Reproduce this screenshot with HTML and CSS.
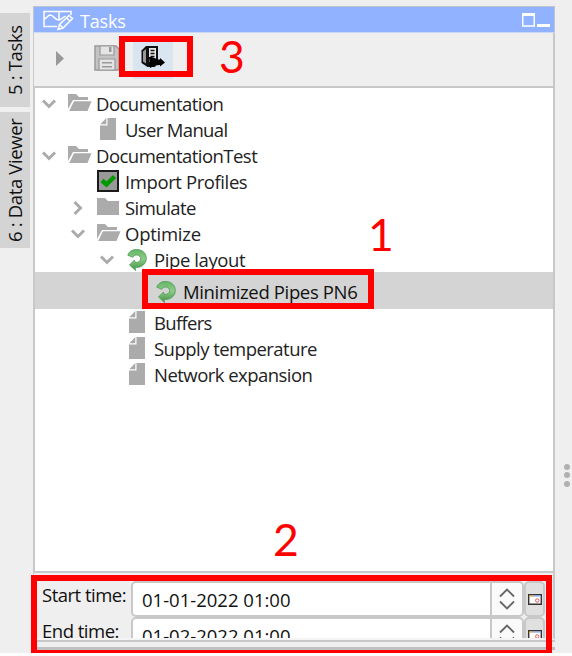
FILE: index.html
```
<!DOCTYPE html>
<html lang="en">
<head>
<meta charset="utf-8">
<title>Tasks</title>
<link rel="stylesheet" href="styles.css">
</head>
<body>
<svg class="defs" width="0" height="0" aria-hidden="true">
  <defs>
    <linearGradient id="leaf" x1="0" y1="0" x2="0" y2="1"><stop offset="0" stop-color="#62b566"/><stop offset=".45" stop-color="#8fcb88"/><stop offset="1" stop-color="#3f9145"/></linearGradient>
    <symbol id="down" viewBox="0 0 16 12"><path d="M2 2.500 8 8.500 14 2.500" fill="none" stroke="#ababab" stroke-width="3"/></symbol>
    <symbol id="right" viewBox="0 0 12 16"><path d="M2.500 2 8.500 8 2.500 14" fill="none" stroke="#ababab" stroke-width="3"/></symbol>
    <symbol id="open" viewBox="0 0 24 18"><path d="M0 15V0h8l3 3h9v3H5Z" fill="#ababab"/><path d="M6 7.300h17.500L19.500 17H1.200Z" fill="#ababab"/></symbol>
    <symbol id="folder" viewBox="0 0 24 18"><path d="M0 0h8l3 3h11v14H0Z" fill="#ababab"/></symbol>
    <symbol id="page" viewBox="0 0 16 22"><path d="M7.500 0H16v22H0V7.500h7.500Z" fill="#ababab"/><path d="M6.300 0v6.300H.300Z" fill="#ababab"/></symbol>
    <symbol id="check" viewBox="0 0 22 22"><path d="M1 1h20v20H1Z" fill="#999" stroke="#1b1b1b" stroke-width="2"/><path d="m5 10.500 4.500 4L17.500 6.500" fill="none" stroke="#009a00" stroke-width="4.500"/></symbol>
    <symbol id="cycle" viewBox="0 0 20 22"><path d="M.800 6.200C2 2.300 5.500.500 9.700.500c5.500 0 9.600 3.600 9.600 8.800 0 5.300-4 9-9.700 9.200l-1.600.1.600 3L2.500 16l5-5 .6 2.500c2.900.2 5.500-1.200 5.500-3.900 0-2.200-1.600-3.600-3.800-3.600-1.800 0-3 .7-3.900 2.300Z" fill="url(#leaf)" stroke="#4a9c50" stroke-width=".8"/></symbol>
    <symbol id="calendar" viewBox="0 0 14 11"><path d="M.700.700h12.600v9.600H.700Z" fill="#fff" stroke="#333" stroke-width="1.400"/><path d="M1.400 1.400H5v1.300H1.400Z" fill="#f0b040"/><path d="M5 1.400h7.600v1.300H5Z" fill="#91b2ff"/><circle cx="9.200" cy="6.500" r="1.700" fill="none" stroke="#ef5555"/></symbol>
  </defs>
</svg>
<div class="app">
  <nav class="side">
    <div class="tab tab-tasks"><span>5 : Tasks</span></div>
    <div class="tab tab-viewer"><span>6 : Data Viewer</span></div>
  </nav>
  <main class="panel">
    <header class="title">
      <svg class="logo" width="32" height="22" viewBox="0 0 32 22" fill="none" stroke="#fff" stroke-width="1.500"><path d="M14 16.500H1V1.500h27V5M1.500 9c3-1 3-4 6-4s5 6 9 5l6-4M16 2v8"/><path d="m15 19.500 1.500-5L26 5.500l3.500 3-9.500 9.500Z" fill="#91b2ff"/><path d="m16.500 14.500 3.500 3.500M23.500 8l3.500 3"/></svg>
      <h1>Tasks</h1>
      <svg class="window" width="28" height="14" viewBox="0 0 28 14" fill="none" stroke="#fff"><path d="M.750 0v13h11.500V0" stroke-width="1.500"/><path d="M0 1.500h13" stroke-width="3"/><path d="M15 12.500h13" stroke-width="3"/></svg>
    </header>
    <div class="toolbar">
      <svg class="play" width="8" height="15" viewBox="0 0 8 15"><path d="m0 0 8 7.500L0 15Z" fill="#999"/></svg>
      <svg class="save" width="26" height="26" viewBox="0 0 26 26"><path d="M1 1h21l3 3v21H1Z" fill="#c4c4c4" stroke="#999" stroke-width="1.500"/><path d="M6 1h14v9H6ZM5 14h16v11H5Z" fill="#e4e4e4" stroke="#999" stroke-width="1.200"/><path d="M15 2h2.500v5H15ZM8 17h10v1.500H8Zm0 4h10v1.500H8Z" fill="#999"/></svg>
      <div class="run"><svg width="24" height="24" viewBox="0 0 24 24"><path d="M.500 5.500 5 1h12v16l-3 5H6.500l-6-4Z" fill="#111"/><path d="M2 6.500 5 4v14.500L2 16.500Z" fill="#999"/><path d="M8 3h7v14H8Z" fill="#e8e8e8"/><path d="M9.500 5.500h4M9.500 8.500h4M9.500 11.500h4" stroke="#111" stroke-width="1.300"/><path d="M8 12h3l6 2.500h2V13l5 4.500-5 4V20l-5 .5L9 23Z" fill="#000"/></svg></div>
    </div>
    <section class="tree">
      <div class="row l0"><svg class="arrow"><use href="#down"/></svg><svg class="fold"><use href="#open"/></svg><span class="label t1">Documentation</span></div>
      <div class="row l1"><svg class="page"><use href="#page"/></svg><span class="label t2">User Manual</span></div>
      <div class="row l0"><svg class="arrow"><use href="#down"/></svg><svg class="fold"><use href="#open"/></svg><span class="label t3">DocumentationTest</span></div>
      <div class="row l1"><svg class="check"><use href="#check"/></svg><span class="label t4">Import Profiles</span></div>
      <div class="row l1"><svg class="arrow side-arrow"><use href="#right"/></svg><svg class="fold"><use href="#folder"/></svg><span class="label t5">Simulate</span></div>
      <div class="row l1"><svg class="arrow"><use href="#down"/></svg><svg class="fold"><use href="#open"/></svg><span class="label t6">Optimize</span></div>
      <div class="row l2"><svg class="arrow"><use href="#down"/></svg><svg class="cycle"><use href="#cycle"/></svg><span class="label t7">Pipe layout</span></div>
      <div class="row l3 selected"><svg class="cycle"><use href="#cycle"/></svg><span class="label t8">Minimized Pipes PN6</span></div>
      <div class="row l2"><svg class="page"><use href="#page"/></svg><span class="label t9">Buffers</span></div>
      <div class="row l2"><svg class="page"><use href="#page"/></svg><span class="label t10">Supply temperature</span></div>
      <div class="row l2"><svg class="page"><use href="#page"/></svg><span class="label t11">Network expansion</span></div>
    </section>
    <section class="form">
      <div class="field"><label>Start time:</label><div class="input">01-01-2022 01:00</div><div class="spin"><svg width="16" height="24" viewBox="0 0 16 24" fill="none" stroke="#666" stroke-width="1.800"><path d="m1 9.500 7-7 7 7M1 14.500l7 7 7-7"/></svg></div><div class="date"><svg width="14" height="11"><use href="#calendar"/></svg></div></div>
      <div class="field"><label>End time:</label><div class="input">01-02-2022 01:00</div><div class="spin"><svg width="16" height="24" viewBox="0 0 16 24" fill="none" stroke="#666" stroke-width="1.800"><path d="m1 9.500 7-7 7 7M1 14.500l7 7 7-7"/></svg></div><div class="date"><svg width="14" height="11"><use href="#calendar"/></svg></div></div>
    </section>
    <div class="next-panel"></div>
  </main>
  <aside class="grip"><i></i><i></i><i></i></aside>
  <div class="mark box1"></div><div class="mark box2"></div><div class="mark box3"></div>
  <span class="num n1">1</span><span class="num n2">2</span><span class="num n3">3</span>
</div>
</body>
</html>
```
FILE: styles.css
```
* { box-sizing: border-box; }
body { margin: 0; background: #fff; font: 18.5px/26px "Open Sans", "Noto Sans", sans-serif; color: #222; }
svg { display: block; flex: none; }
.defs { position: absolute; }
.app { position: relative; display: flex; width: 572px; height: 653px; background: #efefef; }

.side { width: 33px; padding-top: 13px; display: flex; flex-direction: column; gap: 5px; }
.tab { width: 30px; background: #d4d4d4; display: flex; align-items: center; justify-content: flex-end; writing-mode: vertical-rl; transform: rotate(180deg); color: #111; line-height: 30px; letter-spacing: -.35px; white-space: nowrap; }
.tab span { display: block; }
.tab-tasks { height: 94px; padding-bottom: 12px; }
.tab-viewer { height: 136px; padding-bottom: 6px; }

.panel { width: 522px; padding-top: 6px; display: flex; flex-direction: column; }
.title { height: 27px; padding: 0 4px 0 9px; display: flex; align-items: center; background: #91b2ff; border: 1px solid #bdc3d0; border-bottom-color: #c9d8f7; }
.title h1 { margin: 2px auto 0 5px; font-size: 18px; font-weight: 400; letter-spacing: -.2px; color: #fff; }
.logo { margin-top: 2px; }
.toolbar { height: 53px; padding-left: 22px; padding-bottom: 3px; display: flex; align-items: center; border: solid #c8c8c8; border-width: 0 2px 0 1px; }
.save { margin-left: 30px; }
.run { width: 40px; height: 38px; margin: 4px 0 0 13px; padding: 4px 0 0 8px; background: #d9e5f0; }
.tree { height: 487px; padding-top: 3px; background: #fff; border: 2px solid #c8c8c8; }
.row { height: 26px; display: flex; align-items: center; white-space: nowrap; }
.l0 { padding-left: 6px; }
.l1 { padding-left: 35px; }
.l2 { padding-left: 64px; }
.l3 { padding-left: 121px; }
.label { letter-spacing: -.53px; }
.t2 { letter-spacing: -.65px; }
.t4 { letter-spacing: -.4px; }
.t6 { letter-spacing: -.25px; }
.t7 { letter-spacing: -.4px; }
.t8 { letter-spacing: -.35px; }
.t9 { letter-spacing: -.7px; }
.selected { height: 37px; margin-top: -1px; padding-top: 3px; background: #d4d4d4; color: #111; }
.selected + .row { margin-top: 1px; }
.arrow { width: 16px; height: 12px; }
.side-arrow { width: 12px; height: 16px; margin: 0 2px; }
.fold { width: 24px; height: 18px; margin: -3px 4px 0 11px; }
.page { width: 16px; height: 22px; margin: -3px 9px 0 30px; }
.check { width: 22px; height: 22px; margin: -2px 6px 0 27px; }
.cycle { width: 20px; height: 22px; margin: 0 7px 0 12px; }
.selected .cycle { margin-left: 0; }

.form { height: 67px; padding-top: 8px; overflow: hidden; border-left: 1px solid #c8c8c8; border-right: 2px solid #c8c8c8; border-bottom: 2px solid #f4f4f4; }
.field { height: 36px; display: flex; color: #111; }
.field label { width: 97px; padding-left: 8px; line-height: 28px; letter-spacing: -.5px; white-space: nowrap; }
.input { width: 361px; height: 36px; padding-left: 9px; line-height: 34px; background: #fff; border: 2px solid #c8c8c8; border-radius: 5px 0 0 5px; }
.spin { width: 34px; height: 36px; margin-left: -2px; display: grid; place-items: center; background: #fafafa; border: 2px solid #c8c8c8; border-radius: 0 5px 5px 0; }
.date { width: 21px; height: 36px; display: grid; place-items: center; background: #e0e0e0; border: 2px solid #c8c8c8; border-radius: 5px; }
.next-panel { height: 10px; border-top: 2px solid #c8c8c8; border-bottom: 3px solid #c0c0c0; }

.grip { margin-left: 9px; padding-top: 464px; display: flex; flex-direction: column; gap: 2.400px; }
.grip i { width: 6px; height: 6px; border-radius: 50%; background: #b0b0b0; }

.mark { position: absolute; border: 6px solid #f00; }
.box1 { left: 142px; top: 269px; width: 232px; height: 40px; }
.box2 { left: 31px; top: 575px; width: 521px; height: 81px; }
.box3 { left: 119px; top: 36px; width: 74px; height: 41px; }
.num { position: absolute; font: 44.500px/44px Lato, sans-serif; color: #f00; }
.n1 { left: 368px; top: 212px; }
.n2 { left: 273px; top: 517px; }
.n3 { left: 219px; top: 34px; }
```
